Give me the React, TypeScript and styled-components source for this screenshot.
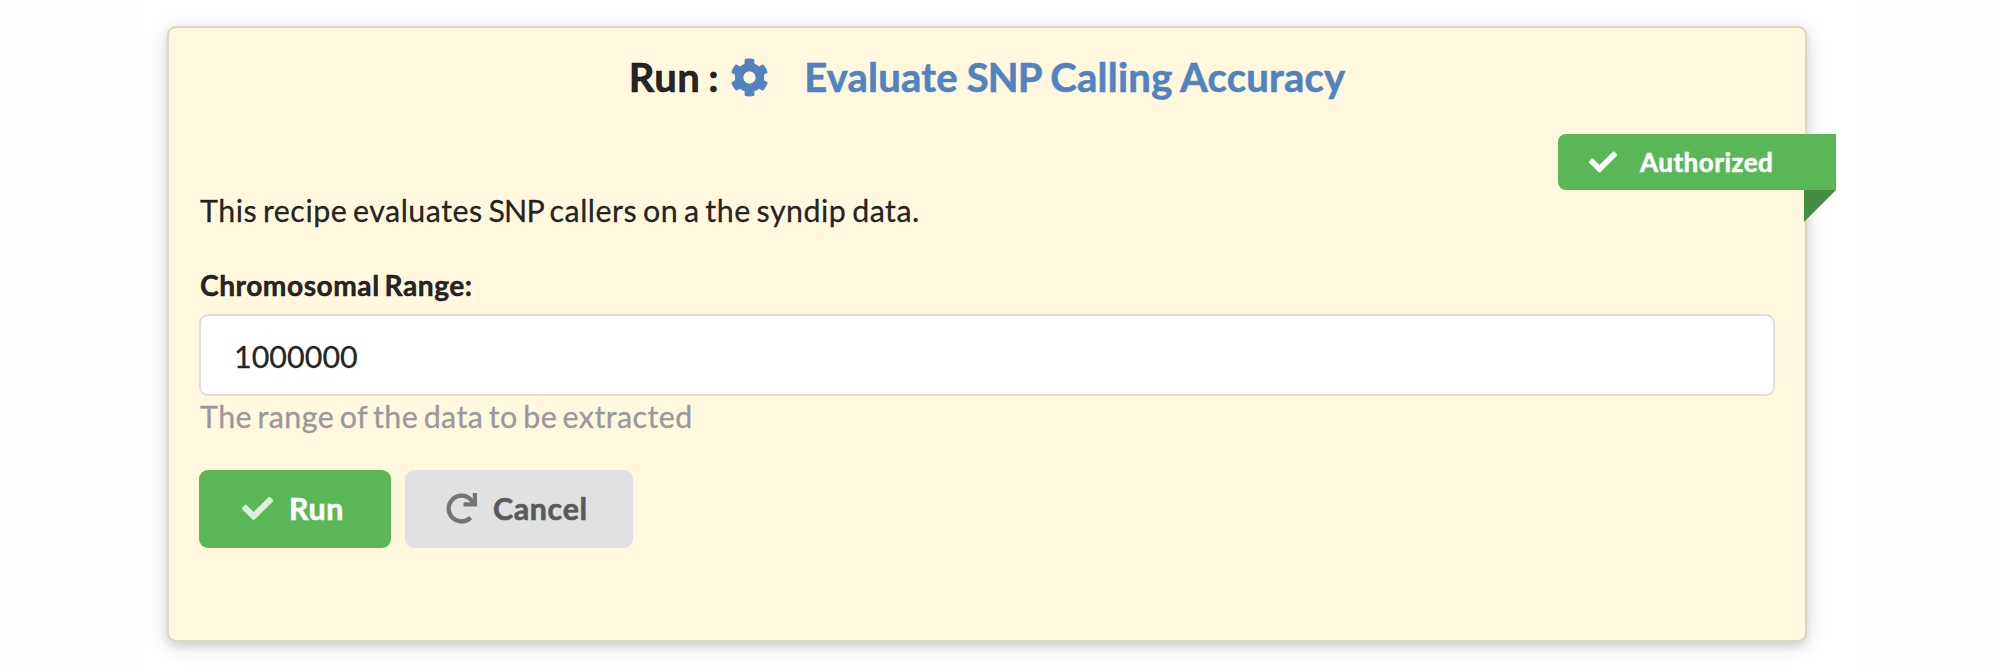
import React from "react";
import styled, { createGlobalStyle } from "styled-components";
import { FaCheck, FaCog, FaRedo } from "react-icons/fa";

const GlobalStyle = createGlobalStyle`
  *, *::before, *::after { box-sizing: border-box; }
  body {
    margin: 0;
    background: #fdfdfd;
    color: rgba(0, 0, 0, 0.87);
    font-family: Lato, "Liberation Sans", sans-serif;
    font-size: 30.4px;
    line-height: 43px;
  }
`;

const Page = styled.main`
  width: 1724px;
  height: 666px;
  margin: 0 auto;
  padding: 26px 55px 24px 29px;
  background: #fff;
  overflow: hidden;
`;

const Segment = styled.form`
  position: relative;
  width: 1640px;
  height: 616px;
  padding: 30px;
  border: 2px solid #dbd7c1;
  border-radius: 9px;
  background: #fff8df;
  box-shadow: 0 4px 8px rgba(34, 36, 38, 0.12), 0 4px 20px rgba(34, 36, 38, 0.15);
`;

const Title = styled.h2`
  display: flex;
  justify-content: center;
  align-items: center;
  height: 46px;
  margin: -4px 0 34px;
  font-size: 40px;
  line-height: 46px;
  font-weight: 700;
  letter-spacing: 0.6px;
  word-spacing: -2.6px;
  -webkit-text-stroke: 0.6px currentColor;
`;

const TitleLink = styled.a`
  display: flex;
  align-items: center;
  gap: 35px;
  margin-left: 11px;
  color: #5183c1;
  text-decoration: none;
  letter-spacing: 0.25px;
  word-spacing: -1.2px;

  svg { width: 39px; height: 39px; }
`;

const Acronym = styled.span`
  letter-spacing: -0.9px;
`;

const Ribbon = styled.div`
  position: relative;
  display: flex;
  align-items: center;
  gap: 23px;
  width: 278px;
  height: 56px;
  margin: 0 -61px 0 auto;
  padding-left: 31px;
  border-radius: 8px 0 0 8px;
  background: #5ab757;
  color: #fff;
  font-size: 26px;
  font-weight: 700;
  letter-spacing: 0.5px;
  -webkit-text-stroke: 0.6px currentColor;

  svg { width: 28px; height: 28px; stroke-width: 0; }

  &::after {
    content: "";
    position: absolute;
    top: 100%;
    right: 0;
    width: 32px;
    height: 32px;
    background: #468c43;
    clip-path: polygon(0 0, 100% 0, 0 100%);
  }
`;

const Description = styled.p`
  margin: -1px 0 31px;
  padding-left: 1px;
  letter-spacing: 0.5px;
  word-spacing: -2.5px;
  -webkit-text-stroke: 0.3px currentColor;
`;

const Label = styled.label`
  display: block;
  padding: 1px 0 0 1px;
  margin-bottom: 7px;
  font-size: 28.2px;
  line-height: 43px;
  font-weight: 700;
  letter-spacing: 0.5px;
  word-spacing: -2.4px;
  -webkit-text-stroke: 0.5px currentColor;
`;

const Input = styled.input`
  display: block;
  width: 100%;
  height: 82px;
  padding: 1px 33px 0;
  border: 2px solid #dededf;
  border-radius: 9px;
  background: #fff;
  color: rgba(0, 0, 0, 0.87);
  font: inherit;
  letter-spacing: 0.05px;
  outline: none;
  -webkit-text-stroke: 0.3px currentColor;
`;

const Help = styled.p`
  margin: -1px 0 32px;
  padding-left: 1px;
  color: #999;
  letter-spacing: 0.45px;
  word-spacing: -2.8px;
  -webkit-text-stroke: 0.3px currentColor;
`;

const Actions = styled.div`
  display: flex;
  gap: 14px;
`;

const Button = styled.button<{ $primary?: boolean }>`
  display: flex;
  align-items: center;
  gap: 16px;
  width: ${(p) => (p.$primary ? 192 : 228)}px;
  height: 78px;
  padding: 0 0 2px ${(p) => (p.$primary ? 43 : 41)}px;
  border: 0;
  border-radius: 9px;
  background: ${(p) => (p.$primary ? "#5ab757" : "#e0e1e2")};
  color: ${(p) => (p.$primary ? "#fff" : "#5a5a5a")};
  font: inherit;
  font-weight: 700;
  letter-spacing: 0.65px;
  -webkit-text-stroke: 0.6px currentColor;

  svg { width: 31px; height: 31px; opacity: 0.8; }
`;

export default function App() {
  return (
    <>
      <GlobalStyle />
      <Page>
        <Segment>
          <Title>
            <span>Run :</span>
            <TitleLink>
              <FaCog />
              <span>
                Evaluate <Acronym>SNP</Acronym> Calling Accuracy
              </span>
            </TitleLink>
          </Title>
          <Ribbon>
            <FaCheck />
            Authorized
          </Ribbon>
          <Description>
            This recipe evaluates <Acronym>SNP</Acronym> callers on a the syndip data.
          </Description>
          <Label htmlFor="range">Chromosomal Range:</Label>
          <Input id="range" type="text" defaultValue="1000000" />
          <Help>The range of the data to be extracted</Help>
          <Actions>
            <Button type="button" $primary>
              <FaCheck />
              Run
            </Button>
            <Button type="button">
              <FaRedo />
              Cancel
            </Button>
          </Actions>
        </Segment>
      </Page>
    </>
  );
}
